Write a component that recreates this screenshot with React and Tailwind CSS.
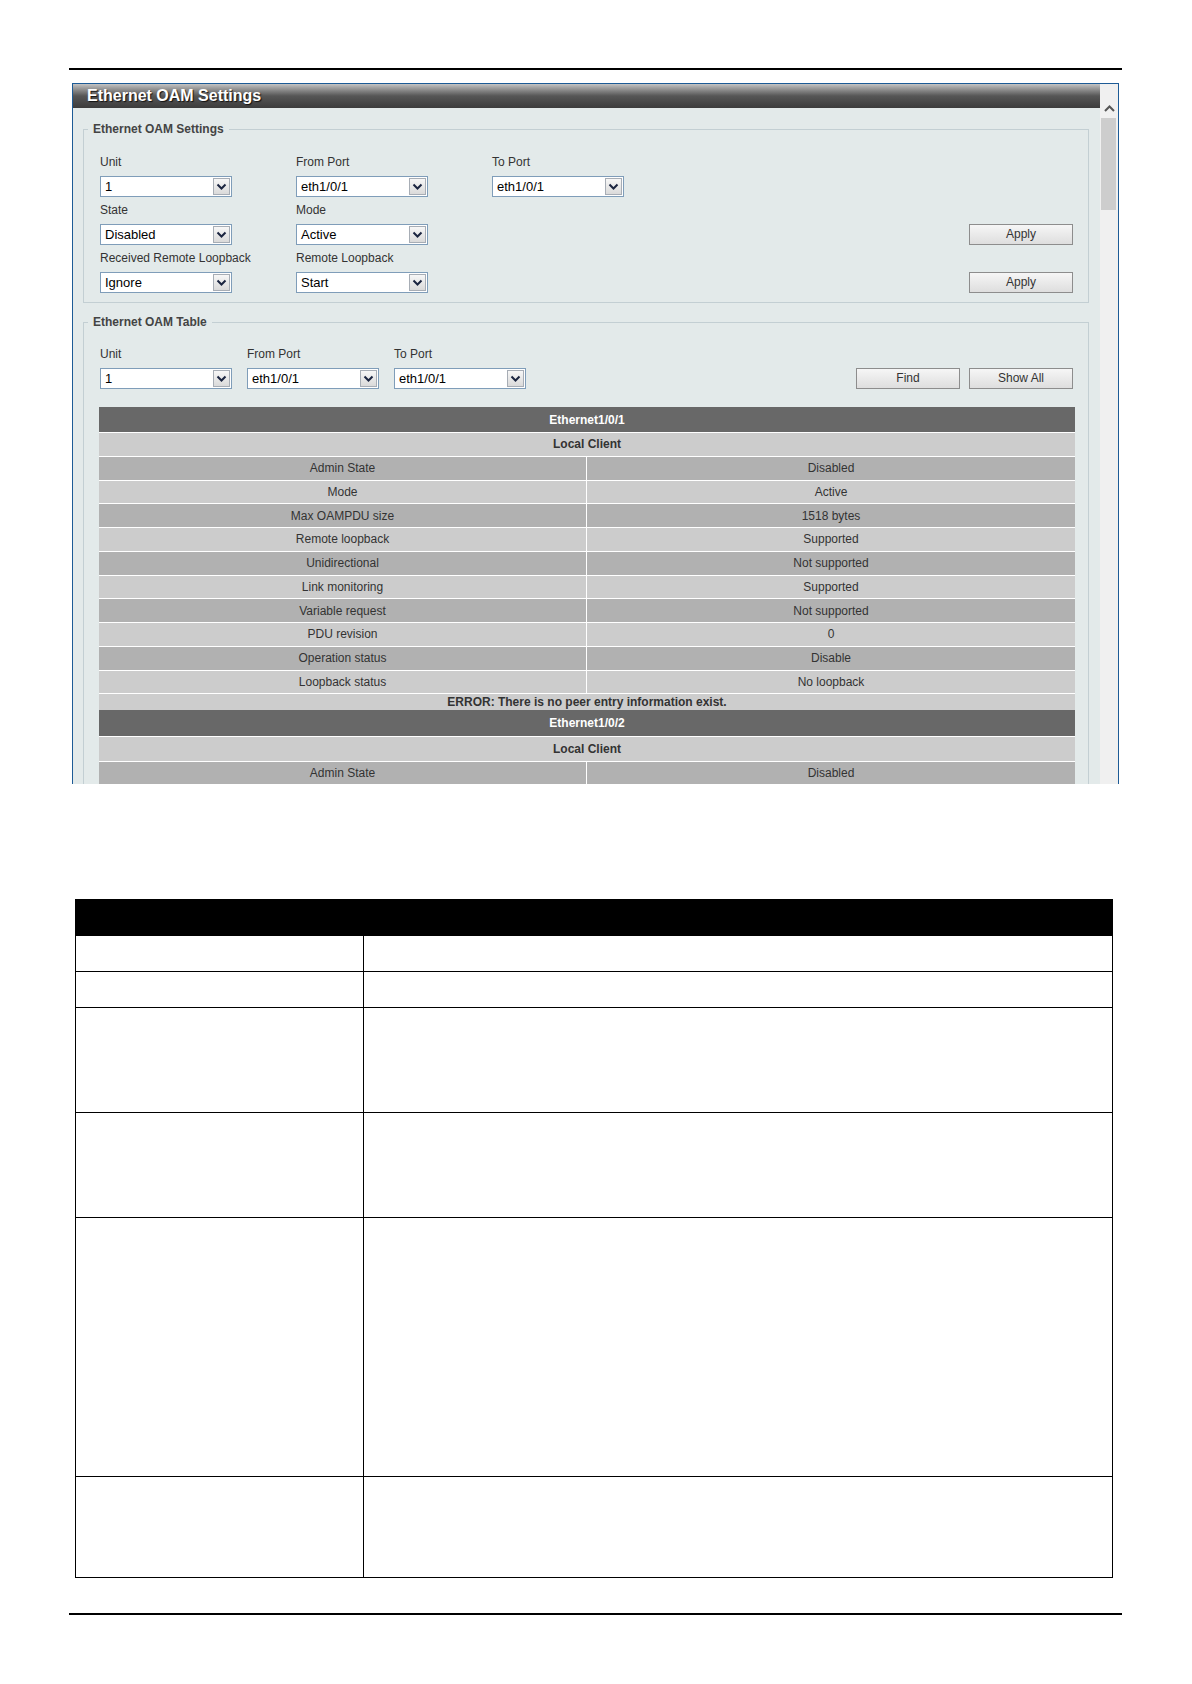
import React from 'react'

const LOCAL_ROWS = [
  ['Admin State', 'Disabled'],
  ['Mode', 'Active'],
  ['Max OAMPDU size', '1518 bytes'],
  ['Remote loopback', 'Supported'],
  ['Unidirectional', 'Not supported'],
  ['Link monitoring', 'Supported'],
  ['Variable request', 'Not supported'],
  ['PDU revision', '0'],
  ['Operation status', 'Disable'],
  ['Loopback status', 'No loopback'],
]

// heights of the parameter/description rows below the screenshot
const DESC_ROWS = [36, 36, 105, 105, 259, 101]

function Chevron() {
  return (
    <svg width="11" height="8" viewBox="0 0 11 8">
      <polyline points="1.5,1.5 5.5,5.5 9.5,1.5" fill="none" stroke="#1b2540" strokeWidth="2" />
    </svg>
  )
}

function Select({ value, w = 'w-[132px]' }) {
  return (
    <div className={`${w} h-[21px] bg-white border border-[#7f9db9] flex items-center`}>
      <span className="flex-1 pl-[4px] text-[13px] leading-[19px] text-black">{value}</span>
      <div className="w-[17px] h-[17px] mr-[1px] border border-[#a7adb5] bg-gradient-to-b from-[#f7f7f7] to-[#dadada] flex items-center justify-center">
        <Chevron />
      </div>
    </div>
  )
}

function Field({ label, value, w = 'w-[196px]' }) {
  return (
    <div className={`${w} shrink-0`}>
      <div className="h-[14px] text-[12px] leading-[14px] text-[#333]">{label}</div>
      <div className="mt-[7px]">
        <Select value={value} />
      </div>
    </div>
  )
}

function Button({ children }) {
  return (
    <button className="w-[104px] h-[21px] border border-[#8d8d8d] bg-gradient-to-b from-[#f6f6f6] to-[#dedede] text-[12px] leading-[19px] text-[#333]">
      {children}
    </button>
  )
}

function Fieldset({ title, className, children }) {
  return (
    <fieldset className={`border border-[#c3cfd3] ${className}`}>
      <legend className="ml-[4px] px-[5px] text-[12px] leading-[14px] font-bold text-[#444]">{title}</legend>
      {children}
    </fieldset>
  )
}

// one port's block in the OAM table; `rows` limits how many detail rows are drawn
function PortBlock({ port, rows = LOCAL_ROWS, headH = 'h-[25px]', clientH = 'h-[23.75px]' }) {
  return (
    <div>
      <div className={`${headH} bg-[#686868] text-white font-bold text-[12px] flex items-center justify-center`}>{port}</div>
      <div className={`${clientH} border-t border-white bg-[#cccccc] text-[#333] font-bold text-[12px] flex items-center justify-center`}>
        Local Client
      </div>
      {rows.map(([k, v], i) => (
        <div
          key={k}
          className={`h-[23.75px] border-t border-white flex text-[12px] text-[#333] ${i % 2 === 0 ? 'bg-[#b1b1b1]' : 'bg-[#cccccc]'}`}
        >
          <div className="w-1/2 border-r border-white flex items-center justify-center">{k}</div>
          <div className="w-1/2 flex items-center justify-center">{v}</div>
        </div>
      ))}
    </div>
  )
}

export default function App() {
  return (
    <div className="w-[1192px] h-[1684px] bg-white font-['Liberation_Sans',Arial,sans-serif]">
      <div className="pt-[68px] pl-[69px]">
        <div className="w-[1053px] h-[2px] bg-black" />
      </div>

      {/* embedded web UI window */}
      <div className="mt-[13px] ml-[72px] w-[1047px] h-[701px] border-t border-x border-[#1d5b96] flex overflow-hidden">
        <div className="w-[1027px] bg-[#e3eaea]">
          <div className="h-[24px] bg-gradient-to-b from-[#c4c4c4] via-[#565656] to-[#3c3c3c] flex items-center pl-[14px]">
            <span className="text-white font-bold text-[16px] leading-none [text-shadow:1px_1px_1px_#111]">
              Ethernet OAM Settings
            </span>
          </div>

          <Fieldset title="Ethernet OAM Settings" className="mt-[14px] ml-[10px] mr-[11px]">
            <div className="pt-[19px] pb-[9px] pl-[16px] pr-[15px] flex flex-col gap-[6px]">
              <div className="flex items-end">
                <Field label="Unit" value="1" />
                <Field label="From Port" value="eth1/0/1" />
                <Field label="To Port" value="eth1/0/1" />
              </div>
              <div className="flex items-end">
                <Field label="State" value="Disabled" />
                <Field label="Mode" value="Active" />
                <div className="flex-1" />
                <Button>Apply</Button>
              </div>
              <div className="flex items-end">
                <Field label="Received Remote Loopback" value="Ignore" />
                <Field label="Remote Loopback" value="Start" />
                <div className="flex-1" />
                <Button>Apply</Button>
              </div>
            </div>
          </Fieldset>

          <Fieldset title="Ethernet OAM Table" className="mt-[12px] ml-[10px] mr-[11px]">
            <div className="pt-[18px] pl-[16px] pr-[15px] flex items-end">
              <Field label="Unit" value="1" w="w-[147px]" />
              <Field label="From Port" value="eth1/0/1" w="w-[147px]" />
              <Field label="To Port" value="eth1/0/1" w="w-[147px]" />
              <div className="flex-1" />
              <div className="flex gap-[9px]">
                <Button>Find</Button>
                <Button>Show All</Button>
              </div>
            </div>
            <div className="mt-[18px] ml-[15px] mr-[13px]">
              <PortBlock port="Ethernet1/0/1" />
              <div className="h-[17px] border-t border-white bg-[#cdcdcd] text-[12px] font-bold text-[#333] flex items-center justify-center">
                ERROR: There is no peer entry information exist.
              </div>
              <PortBlock port="Ethernet1/0/2" rows={LOCAL_ROWS.slice(0, 1)} headH="h-[26px]" clientH="h-[24.5px]" />
            </div>
          </Fieldset>
        </div>

        {/* scrollbar */}
        <div className="w-[18px] bg-[#f0f0f0]">
          <div className="h-[34px] flex items-end justify-center pb-[6px]">
            <svg width="11" height="7" viewBox="0 0 11 7">
              <polyline points="1,6 5.5,1.5 10,6" fill="none" stroke="#555" strokeWidth="2" />
            </svg>
          </div>
          <div className="ml-[1px] w-[15px] h-[92px] bg-[#cdcdcd]" />
        </div>
      </div>

      {/* parameter description table */}
      <div className="mt-[115px] ml-[75px] w-[1038px] border border-black">
        <div className="h-[35px] bg-black" />
        {DESC_ROWS.map((h, i) => (
          <div key={i} className="flex border-t border-black" style={{ height: h }}>
            <div className="w-[288px] border-r border-black" />
            <div className="flex-1" />
          </div>
        ))}
      </div>

      <div className="mt-[35px] ml-[69px] w-[1053px] h-[2px] bg-black" />
    </div>
  )
}
